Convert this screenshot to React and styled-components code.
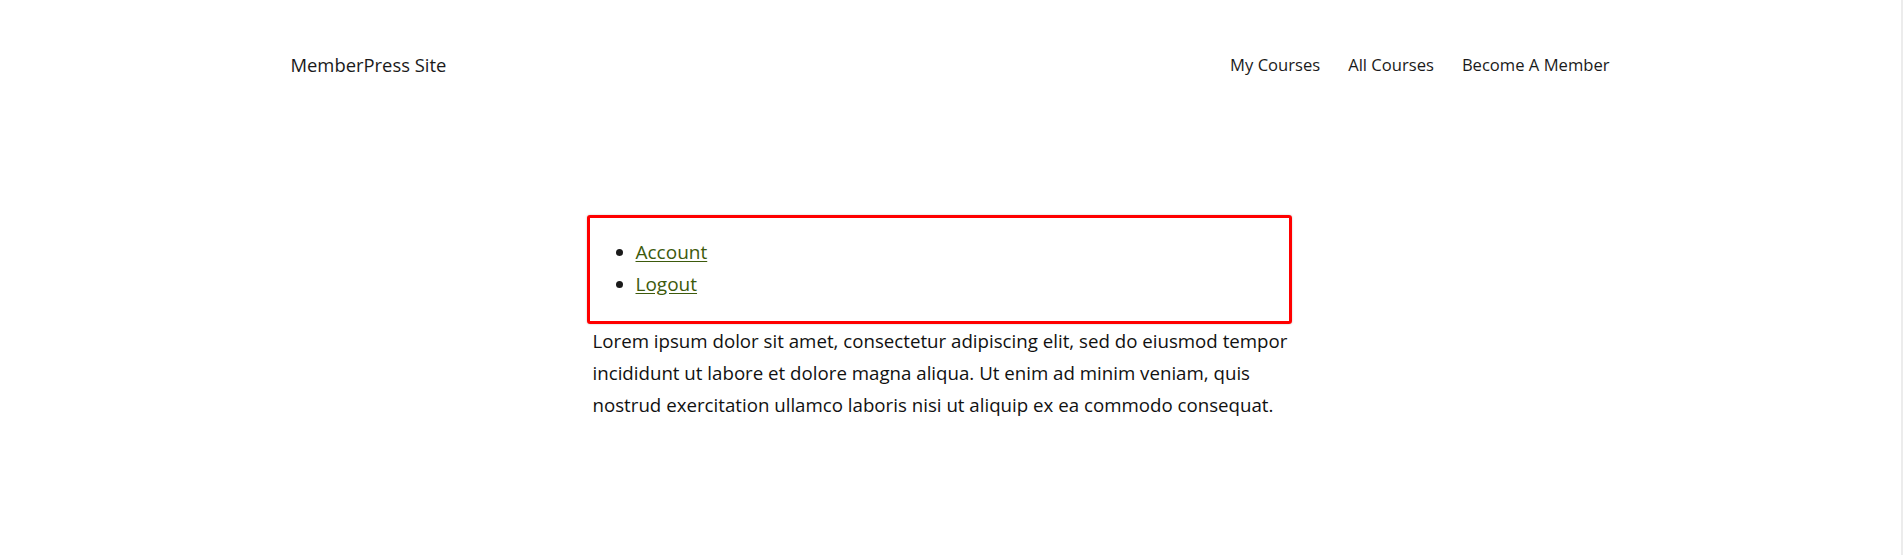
import React from "react";
import styled, { createGlobalStyle } from "styled-components";

const Global = createGlobalStyle`
  html, body { margin: 0; padding: 0; background: #fff; }
  body { font-family: "Open Sans", "Noto Sans", sans-serif; color: #1a1a1a; }
`;

const Page = styled.div`
  min-height: 555px;
  box-sizing: border-box;
  border-right: 2px solid #ececec;
`;

const Header = styled.header`
  max-width: 1320px;
  margin: 0 auto;
  height: 128px;
  display: flex;
  align-items: center;
  justify-content: space-between;
  box-sizing: border-box;
`;

const SiteTitle = styled.a`
  font-size: 18.4px;
  color: #1a1a1a;
  text-decoration: none;
`;

const Nav = styled.nav`
  display: flex;
  gap: 28px;
  padding-right: 1px;
`;

const NavLink = styled.a`
  font-size: 16.6px;
  color: #1a1a1a;
  text-decoration: none;
`;

const Main = styled.main`
  max-width: 1320px;
  margin: 0 auto;
  padding-top: 87px;
  display: flex;
`;

const Column = styled.div`
  width: 705px;
  margin-left: 296px;
`;

const MenuBox = styled.div`
  border: 3px solid #ff0000;
  border-radius: 3px;
  box-shadow: 0 0 2px rgba(0, 0, 0, 0.25);
  padding: 18px 0 21px 0;
`;

const List = styled.ul`
  margin: 0;
  padding-left: 46px;
  font-size: 19px;
  line-height: 32px;
`;

const Item = styled.li``;

const MenuLink = styled.a`
  color: #3d5a0c;
  text-decoration: underline;
  text-underline-offset: 2px;
`;

const Text = styled.p`
  margin: 1px 0 0 6px;
  font-size: 18.7px;
  line-height: 32px;
  color: #111;
`;

export default function App() {
  return (
    <Page>
      <Global />
      <Header>
        <SiteTitle href="#">MemberPress Site</SiteTitle>
        <Nav>
          <NavLink href="#">My Courses</NavLink>
          <NavLink href="#">All Courses</NavLink>
          <NavLink href="#">Become A Member</NavLink>
        </Nav>
      </Header>
      <Main>
        <Column>
          <MenuBox>
            <List>
              <Item><MenuLink href="#">Account</MenuLink></Item>
              <Item><MenuLink href="#">Logout</MenuLink></Item>
            </List>
          </MenuBox>
          <Text>
            Lorem ipsum dolor sit amet, consectetur adipiscing elit, sed do eiusmod tempor incididunt ut labore et dolore magna aliqua. Ut enim ad minim veniam, quis nostrud exercitation ullamco laboris nisi ut aliquip ex ea commodo consequat.
          </Text>
        </Column>
      </Main>
    </Page>
  );
}
